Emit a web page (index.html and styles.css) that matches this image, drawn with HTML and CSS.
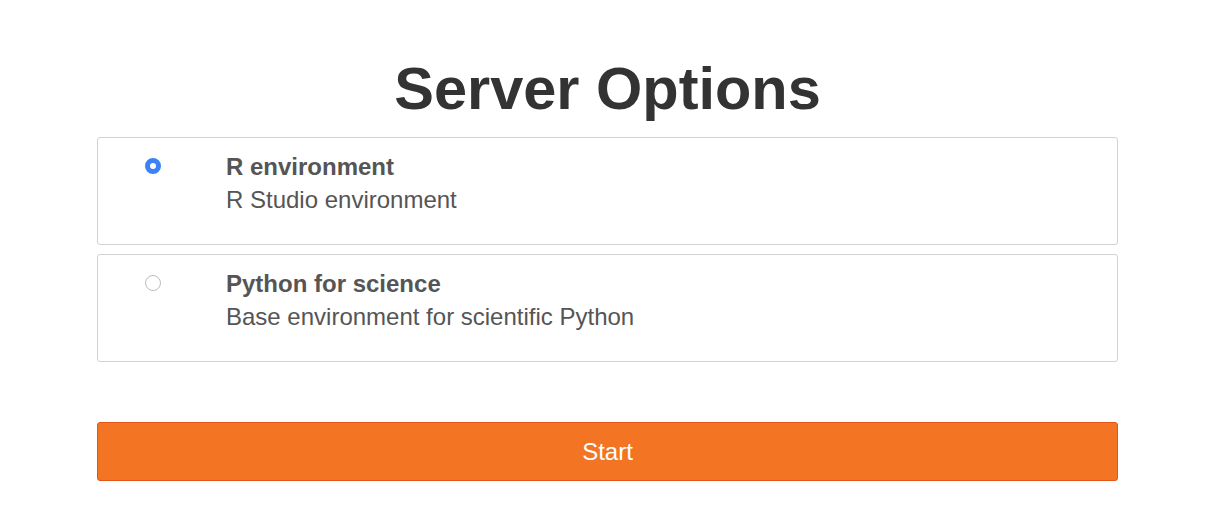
FILE: index.html
```html
<!DOCTYPE html>
<html>
<head>
<meta charset="utf-8">
<title>Server Options</title>
<link rel="stylesheet" href="styles.css">
</head>
<body>
<div class="page">
  <h1 class="title">Server Options</h1>
  <form class="options">
    <label class="option">
      <span class="radio-col"><input class="radio" type="radio" name="profile" checked></span>
      <span class="option-text">
        <strong class="option-name">R environment</strong>
        <span class="option-desc">R Studio environment</span>
      </span>
    </label>
    <label class="option">
      <span class="radio-col"><input class="radio" type="radio" name="profile"></span>
      <span class="option-text">
        <strong class="option-name">Python for science</strong>
        <span class="option-desc">Base environment for scientific Python</span>
      </span>
    </label>
    <button class="start" type="button">Start</button>
  </form>
</div>
</body>
</html>
```

FILE: styles.css
```css
html, body {
  margin: 0;
  padding: 0;
  background: #fff;
}
body {
  font-family: "Liberation Sans", Arial, Helvetica, sans-serif;
  color: #555;
}
.page {
  width: 1021px;
  margin-left: 97px;
  padding-top: 56px;
}
.title {
  margin: 0 0 15px 0;
  font-size: 59.5px;
  line-height: 66px;
  font-weight: bold;
  color: #333;
  text-align: center;
}
.options {
  display: flex;
  flex-direction: column;
  gap: 9px;
  margin: 0;
}
.option {
  display: flex;
  align-items: flex-start;
  border: 1px solid #d2d2d2;
  border-radius: 3px;
  padding: 12px 0 28px 0;
  cursor: pointer;
}
.radio-col {
  display: flex;
  width: 128px;
  padding-left: 47px;
  padding-top: 8px;
  box-sizing: border-box;
}
.radio {
  appearance: none;
  -webkit-appearance: none;
  margin: 0;
  width: 16px;
  height: 16px;
  border-radius: 50%;
  border: 1px solid #bdbdbd;
  background: #fff;
  box-sizing: border-box;
}
.radio:checked {
  border: 5px solid #3a82f6;
  background: #fff;
}
.option-text {
  display: flex;
  flex-direction: column;
  font-size: 24px;
  line-height: 33px;
}
.option-name {
  font-weight: bold;
  color: #555;
}
.option-desc {
  color: #555;
}
.start {
  margin-top: 51px;
  height: 59px;
  width: 100%;
  background: #f37524;
  border: 1px solid #e5541b;
  border-radius: 3px;
  color: #fff;
  font-family: "Liberation Sans", Arial, Helvetica, sans-serif;
  font-size: 24px;
  padding: 0;
}
```
